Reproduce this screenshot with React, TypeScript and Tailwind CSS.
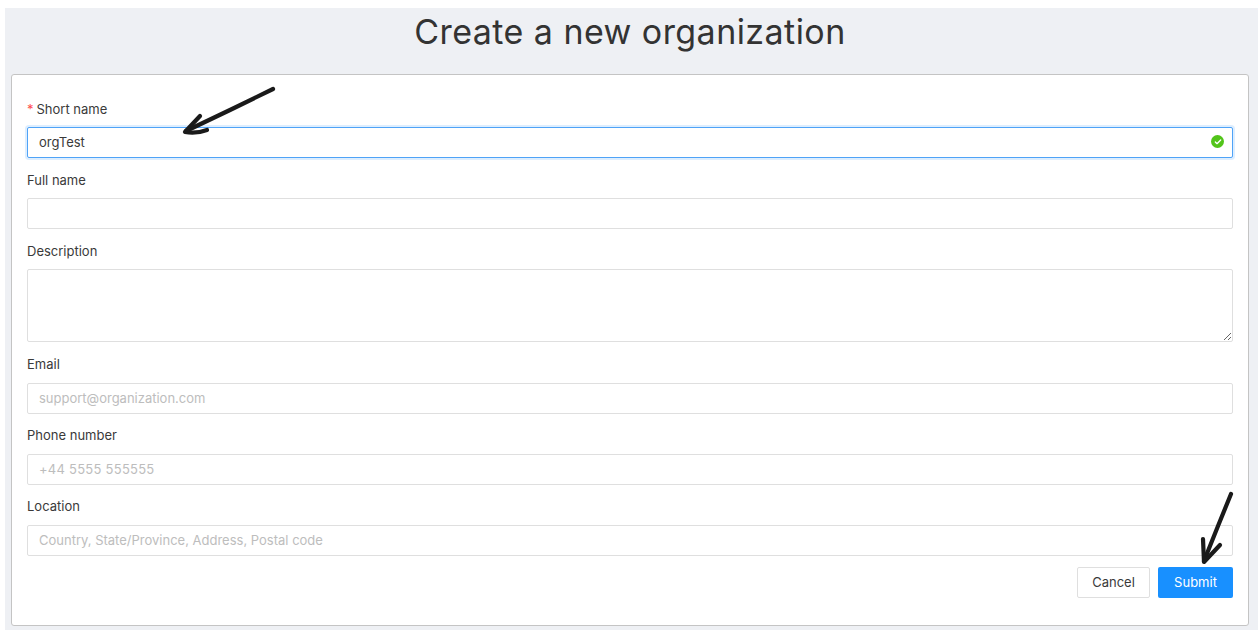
import { Check } from "lucide-react"

const inputClass =
  "block h-[31px] w-full rounded-[2px] border bg-white px-[11px] pb-[1px] text-[13px] text-[#3a3a3a] outline-none placeholder:text-[#bdbdbd]"

const labelClass = "block h-[22px] text-[13px] leading-[22px] text-[#3a3a3a]"

function Field({ label, placeholder, numeric }: { label: string; placeholder?: string; numeric?: boolean }) {
  return (
    <div className="mb-[10px]">
      <label className={labelClass}>{label}</label>
      <input
        className={`${inputClass} mt-[8px] border-[#dfdfdf] ${numeric ? "tracking-[0.25px]" : ""}`}
        placeholder={placeholder}
        readOnly
      />
    </div>
  )
}

export default function App() {
  return (
    <div className="relative h-[633px] w-[1258px] overflow-hidden bg-white pl-[5px] pt-[8px] font-['Inter',sans-serif]">
      <div className="h-[622px] bg-[#eef0f4] pl-[6px]">
        <div className="flex h-[66px] w-[1238px] justify-center">
          <h1 className="text-[34px] font-normal leading-[48px] tracking-[0.44px] text-[#333333]">
            Create a new organization
          </h1>
        </div>
        <div className="h-[552px] w-[1238px] rounded-[3px] border border-[#c4c4c4] bg-white px-[15px] pt-[23px]">
          <form>
            <div className="mb-[11px]">
              <label className={labelClass}>
                <span className="mr-[3px] text-[#ff4d4f]">*</span>Short name
              </label>
              <div className="relative mt-[7px]">
                <input
                  className={`${inputClass} border-[#4fa3f7] shadow-[0_0_0_2px_rgba(24,144,255,0.15)]`}
                  value="orgTest"
                  readOnly
                />
                <span className="absolute right-[9px] top-[8px] flex h-[13px] w-[13px] items-center justify-center rounded-full bg-[#52c41a]">
                  <Check className="h-[8px] w-[8px] text-white" strokeWidth={4} />
                </span>
              </div>
            </div>
            <div className="mb-[11px]">
              <label className={labelClass}>Full name</label>
              <input className={`${inputClass} mt-[7px] border-[#dfdfdf]`} readOnly />
            </div>
            <div className="mb-[11px]">
              <label className={labelClass}>Description</label>
              <textarea className={`${inputClass} mt-[7px] h-[73px] border-[#dfdfdf]`} readOnly />
            </div>
            <Field label="Email" placeholder="support@organization.com" />
            <Field label="Phone number" placeholder="+44 5555 555555" numeric />
            <Field label="Location" placeholder="Country, State/Province, Address, Postal code" />
            <div className="mt-[11px] flex justify-end gap-[8px]">
              <button
                type="button"
                className="h-[31px] w-[73px] rounded-[2px] border border-[#dfdfdf] bg-white text-[13px] text-[#3a3a3a]"
              >
                Cancel
              </button>
              <button type="button" className="h-[31px] w-[75px] rounded-[2px] bg-[#1890ff] text-[13px] text-white">
                Submit
              </button>
            </div>
          </form>
        </div>
      </div>
      {/* hand drawn arrows on top of the screenshot */}
      <svg className="absolute left-0 top-0" width="1258" height="633" fill="none" stroke="#1a1a1a" strokeLinecap="round" strokeLinejoin="round">
        <path d="M273 89 L230 110 L186 131" strokeWidth="4.2" />
        <path d="M200 116 L185 132 Q196 134 207 130" strokeWidth="4.2" />
        <path d="M1231 494 L1218 526 L1204 561" strokeWidth="4.2" />
        <path d="M1203 539 L1204 562 L1220 545" strokeWidth="4.2" />
      </svg>
    </div>
  )
}
